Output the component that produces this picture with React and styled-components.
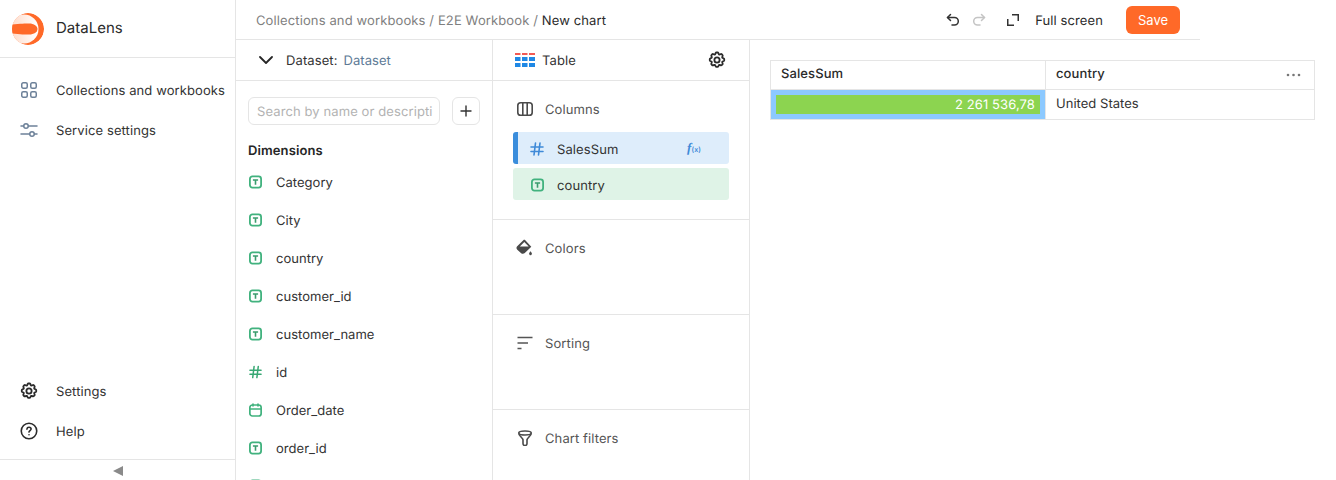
import React from 'react'
import styled, { createGlobalStyle } from 'styled-components'

const GlobalStyle = createGlobalStyle`
    html, body {
        margin: 0;
        padding: 0;
        height: 100%;
        background: #fff;
        font-family: Inter, "Noto Sans", sans-serif;
        font-size: 13px;
        line-height: 18px;
        letter-spacing: 0.1px;
        color: #2b2b2b;
        text-rendering: geometricPrecision;
    }
    * { box-sizing: border-box; }
`;

const Page = styled.div`
    display: flex;
    width: 100%;
    height: 100vh;
    overflow: hidden;
`;

const Label = styled.span`
    padding-top: 2px;
`;

const Sidebar = styled.aside`
    display: flex;
    flex-direction: column;
    flex: 0 0 236px;
    border-right: 1px solid #e5e5e5;
`;

const Brand = styled.div`
    display: flex;
    align-items: center;
    gap: 12px;
    height: 58px;
    padding-left: 12px;
    border-bottom: 1px solid #e5e5e5;
    font-size: 15px;
    letter-spacing: 0;
`;

const BrandName = styled.span`
    padding-bottom: 2px;
`;

const NavGroup = styled.nav`
    display: flex;
    flex-direction: column;
    padding-top: ${props => props.$top || 0}px;
    padding-bottom: ${props => props.$bottom || 0}px;
`;

const NavItem = styled.div`
    display: flex;
    align-items: center;
    gap: 18px;
    height: 40px;
    padding-left: 20px;
    white-space: nowrap;
    color: #333;
    svg { flex: none; }
`;

const Spacer = styled.div`
    flex: 1;
`;

const Collapse = styled.div`
    display: flex;
    justify-content: center;
    align-items: center;
    height: 21px;
    border-top: 1px solid #e5e5e5;
    padding-top: 1px;
`;

const Arrow = styled.span`
    width: 0;
    height: 0;
    border-top: 5px solid transparent;
    border-bottom: 5px solid transparent;
    border-right: 10px solid #8a8a8a;
`;

const Main = styled.div`
    display: flex;
    flex-direction: column;
    flex: 1;
    min-width: 0;
`;

const Header = styled.header`
    display: flex;
    align-items: center;
    width: 964px;
    height: 40px;
    padding: 0 20px;
    border-bottom: 1px solid #e5e5e5;
`;

const Crumbs = styled.div`
    flex: 1;
    padding-top: 2px;
    color: #7f7f7f;
    white-space: nowrap;
    letter-spacing: 0.12px;
`;

const Current = styled.span`
    color: #2b2b2b;
`;

const Actions = styled.div`
    display: flex;
    align-items: center;
`;

const IconSlot = styled.span`
    display: flex;
    align-items: center;
    justify-content: center;
    width: 16px;
    height: 16px;
    margin-right: ${props => props.$right || 0}px;
    transform: ${props => props.$flip ? 'scaleX(-1)' : 'none'};
`;

const FullScreen = styled.span`
    margin-right: 23px;
    padding-top: 2px;
    color: #2b2b2b;
`;

const SaveButton = styled.button`
    width: 54px;
    height: 28px;
    border: none;
    border-radius: 6px;
    background: #ff6928;
    color: #fff;
    font: inherit;
    padding: 0;
`;

const Workspace = styled.div`
    display: flex;
    flex: 1;
    min-height: 0;
`;

const Column = styled.section`
    display: flex;
    flex-direction: column;
    flex: 0 0 257px;
    border-right: 1px solid #e5e5e5;
    overflow: hidden;
`;

const PanelHead = styled.div`
    display: flex;
    align-items: center;
    flex: none;
    height: 41px;
    padding: 0 ${props => props.$right || 0}px 0 ${props => props.$left || 0}px;
    border-bottom: 1px solid #e5e5e5;
`;

const DatasetLabel = styled.span`
    margin-left: 13px;
    padding-top: 2px;
    color: #333;
`;

const DatasetLink = styled.span`
    margin-left: 6px;
    padding-top: 2px;
    color: #5d7a96;
    letter-spacing: 0.05px;
`;

const SearchRow = styled.div`
    display: flex;
    gap: 12px;
    padding: 16px 12px 0;
`;

const SearchBox = styled.div`
    width: 192px;
    height: 28px;
    padding: 0 8px;
    border: 1px solid #e5e5e5;
    border-radius: 6px;
    color: #b3b3b3;
    line-height: 28px;
    white-space: nowrap;
    overflow: hidden;
`;

const AddButton = styled.div`
    display: flex;
    align-items: center;
    justify-content: center;
    width: 28px;
    height: 28px;
    border: 1px solid #e5e5e5;
    border-radius: 6px;
`;

const GroupTitle = styled.div`
    margin: 17px 12px 0;
    height: 17px;
    line-height: 18px;
    font-weight: 600;
    color: #262626;
`;

const FieldList = styled.div`
    display: flex;
    flex-direction: column;
    margin-top: 4px;
`;

const Field = styled.div`
    display: flex;
    flex: none;
    align-items: center;
    gap: 14px;
    height: 38px;
    padding-left: 13px;
    color: #333;
    letter-spacing: 0.03px;
`;

const ChartName = styled.span`
    flex: 1;
    margin-left: 7px;
    padding-top: 2px;
    color: #333;
`;

const Section = styled.div`
    flex: none;
    height: ${props => props.$height}px;
    padding: 0 20px;
    border-bottom: ${props => props.$last ? 'none' : '1px solid #e5e5e5'};
`;

const SectionTitle = styled.div`
    display: flex;
    align-items: center;
    gap: 11px;
    height: 56px;
    padding-left: 3px;
    color: #555;
    margin-bottom: -5px;
`;

const SectionIcon = styled.span`
    display: flex;
    align-items: center;
    justify-content: center;
    width: 18px;
    height: 18px;
`;

const Chip = styled.div`
    display: flex;
    align-items: center;
    gap: 13px;
    width: 216px;
    height: 32px;
    margin-top: ${props => props.$top || 0}px;
    padding-top: 2px;
    padding-left: ${props => props.$accent ? '12px' : '18px'};
    border-left: ${props => props.$accent ? '5px solid #3a8ddc' : 'none'};
    border-radius: 3px;
    background: ${props => props.$bg};
    color: #333;
`;

const ChipName = styled.span`
    flex: 1;
    padding-top: 2px;
`;

const Formula = styled.span`
    margin-right: 28px;
    color: #3f8ad8;
    font-family: "Liberation Serif", serif;
    font-style: italic;
    font-weight: 700;
    font-size: 13px;
    white-space: nowrap;
`;

const FormulaX = styled.span`
    font-family: Inter, sans-serif;
    font-style: normal;
    font-weight: 600;
    font-size: 7px;
`;

const Preview = styled.div`
    flex: 1;
    padding: 20px;
`;

const Table = styled.table`
    width: 545px;
    border-collapse: collapse;
    table-layout: fixed;
    font-size: 13px;
`;

const HeadCell = styled.th`
    position: relative;
    height: 29px;
    padding: 0 10px 3px;
    border: 1px solid #e5e5e5;
    font-weight: 500;
    text-align: left;
    color: #2b2b2b;
`;

const Dots = styled.span`
    position: absolute;
    right: 13px;
    top: 12px;
    display: flex;
    line-height: 0;
`;

const BarCell = styled.td`
    height: 30px;
    padding: 5px;
    border: 1px solid #e5e5e5;
    background: #8cc9ff;
`;

const Bar = styled.div`
    height: 19px;
    padding-right: 5px;
    background: #8cd450;
    color: #fff;
    line-height: 21px;
    text-align: right;
    white-space: nowrap;
    overflow: hidden;
`;

const TextCell = styled.td`
    padding: 0 10px 1px;
    border: 1px solid #e5e5e5;
    color: #333;
    letter-spacing: 0.03px;
`;

const Logo = () => (
    <svg width="32" height="32" viewBox="0 0 32 32">
        <defs>
            <clipPath id="logo-clip"><circle cx="16" cy="16" r="16" /></clipPath>
            <linearGradient id="logo-fill" x1="0" y1="0" x2="1" y2="0">
                <stop offset="0" stopColor="#ffd9c7" />
                <stop offset="1" stopColor="#ffffff" />
            </linearGradient>
        </defs>
        <g clipPath="url(#logo-clip)">
            <circle cx="16" cy="16" r="16" fill="#ff6928" />
            <circle cx="12" cy="16" r="14.500" fill="url(#logo-fill)" />
            <path d="M0 11.500C8 10.500 14 10.500 17 10.500 22 10.500 25.500 13 25.500 16 25.500 19 22 21.500 17 21.500 14 21.500 8 21.500 0 20.500z" fill="#ff6928" />
        </g>
    </svg>
);

const Grid = () => (
    <svg width="18" height="18" viewBox="0 0 18 18" fill="none" stroke="#6d8199" strokeWidth="1.500">
        <rect x="1.750" y="1.750" width="5.500" height="5.500" rx="1.500" />
        <rect x="10.750" y="1.750" width="5.500" height="5.500" rx="1.500" />
        <rect x="1.750" y="10.750" width="5.500" height="5.500" rx="1.500" />
        <rect x="10.750" y="10.750" width="5.500" height="5.500" rx="1.500" />
    </svg>
);

const Sliders = () => (
    <svg width="18" height="18" viewBox="0 0 18 18" fill="none" stroke="#6d8199" strokeWidth="1.500" strokeLinecap="round">
        <path d="M1 5h2.500M8.500 5H17M1 13h8.500M14.500 13H17" />
        <circle cx="6" cy="5" r="2.250" />
        <circle cx="12" cy="13" r="2.250" />
    </svg>
);

const Gear = ({ size = 18, color = '#2b2b2b' }) => (
    <svg width={size} height={size} viewBox="0 0 24 24" fill="none" stroke={color} strokeWidth="2.400" strokeLinecap="round" strokeLinejoin="round">
        <path d="M9.670 4.140 10.300 2.600a1 1 0 0 1 .93-.6h1.540a1 1 0 0 1 .93.600l.63 1.540a1 1 0 0 0 1.300.540l1.560-.600a1 1 0 0 1 1.060.220l1.090 1.090a1 1 0 0 1 .22 1.060l-.6 1.560a1 1 0 0 0 .54 1.300l1.540.63a1 1 0 0 1 .6.930v1.540a1 1 0 0 1-.6.930l-1.540.63a1 1 0 0 0-.54 1.300l.6 1.560a1 1 0 0 1-.22 1.060l-1.090 1.090a1 1 0 0 1-1.060.220l-1.560-.600a1 1 0 0 0-1.300.540l-.63 1.540a1 1 0 0 1-.93.600h-1.540a1 1 0 0 1-.93-.600l-.63-1.540a1 1 0 0 0-1.300-.540l-1.560.600a1 1 0 0 1-1.060-.220l-1.090-1.090a1 1 0 0 1-.22-1.060l.6-1.560a1 1 0 0 0-.54-1.300l-1.540-.63a1 1 0 0 1-.6-.930v-1.540a1 1 0 0 1 .6-.930l1.540-.63a1 1 0 0 0 .54-1.300l-.6-1.560a1 1 0 0 1 .22-1.060l1.090-1.090a1 1 0 0 1 1.060-.220l1.560.600a1 1 0 0 0 1.300-.540z" />
        <circle cx="12" cy="12" r="3.500" />
    </svg>
);

const Help = () => (
    <svg width="18" height="18" viewBox="0 0 18 18" fill="none" stroke="#2b2b2b" strokeWidth="1.600" strokeLinecap="round">
        <circle cx="9" cy="9" r="7.750" />
        <path d="M6.900 7.100A2.100 2.100 0 0 1 9 5.300c1.200 0 2.100.8 2.100 1.800 0 1.500-2.100 1.500-2.100 3" />
        <path d="M9 12.700v.1" />
    </svg>
);

const TextType = () => (
    <svg width="13" height="14" viewBox="0 0 13 14" fill="none" stroke="#41b27e" strokeWidth="1.800">
        <rect x=".900" y="1.400" width="11.200" height="11.200" rx="2.500" />
        <path d="M3.900 5h5.200M6.500 5v4.800" stroke="#3a9c6d" strokeWidth="1.600" />
    </svg>
);

const Hash = ({ color = '#38a874', width = 13 }) => (
    <svg width={width} height="14" viewBox="0 0 14 14" fill="none" stroke={color} strokeWidth="1.600" strokeLinecap="round">
        <path d="M1 5h12M1 9.500h12M5.500 1 4 13M10 1 8.500 13" />
    </svg>
);

const DateType = () => (
    <svg width="13" height="14" viewBox="0 0 13 14" fill="none" stroke="#41b27e" strokeWidth="1.700">
        <rect x=".850" y="2" width="11.300" height="11" rx="2.500" />
        <path d="M1 6h11M4 .5v3M9 .5v3" />
    </svg>
);

const Chevron = () => (
    <svg width="14" height="14" viewBox="0 0 14 14" fill="none" stroke="#262626" strokeWidth="1.800" strokeLinecap="round" strokeLinejoin="round">
        <path d="M1 4l6 6 6-6" />
    </svg>
);

const Plus = () => (
    <svg width="12" height="12" viewBox="0 0 12 12" stroke="#333" strokeWidth="1.400" strokeLinecap="round">
        <path d="M6 1v10M1 6h10" />
    </svg>
);

const TableLogo = () => (
    <svg width="20" height="14" viewBox="0 0 20 14">
        <g fill="#f25a54">
            <rect x="0" y="0" width="5.500" height="2" />
            <rect x="7" y="0" width="5.500" height="2" />
            <rect x="14" y="0" width="6" height="2" />
        </g>
        <g fill="#1f88e5">
            <rect x="0" y="4" width="5.500" height="4" />
            <rect x="7" y="4" width="5.500" height="4" />
            <rect x="14" y="4" width="6" height="4" />
            <rect x="0" y="10" width="5.500" height="4" />
            <rect x="7" y="10" width="5.500" height="4" />
            <rect x="14" y="10" width="6" height="4" />
        </g>
    </svg>
);

const ColumnsIcon = () => (
    <svg width="16" height="16" viewBox="0 0 16 16" fill="none" stroke="#4a4a4a" strokeWidth="1.600">
        <rect x=".800" y="1.800" width="14.400" height="12.400" rx="2.800" />
        <path d="M5.800 2v12M10.200 2v12" />
    </svg>
);

const BucketIcon = () => (
    <svg width="18" height="18" viewBox="0 0 18 18">
        <path d="M9.300 1.200 15.300 7.700 8.800 14c-.9.8-2.500 1-3.600.2L1.300 10.700C.2 9.700.2 8.300 1.200 7.300L7.300 1.200c.6-.6 1.400-.6 2 0z" fill="#4a4a4a" />
        <path d="M8.300 2.900 12.700 7.400H3.800z" fill="#fff" />
        <path d="M14.500 12.200c.9 1.200 1.400 1.900 1.400 2.600a1.400 1.400 0 0 1-2.800 0c0-.7.500-1.400 1.400-2.600z" fill="#4a4a4a" />
    </svg>
);

const SortIcon = () => (
    <svg width="16" height="16" viewBox="0 0 16 16" stroke="#555" strokeWidth="1.500" strokeLinecap="butt">
        <path d="M.5 2.500h15M.5 8H11M.5 13.500h4" />
    </svg>
);

const FunnelIcon = () => (
    <svg width="16" height="16" viewBox="0 0 16 16" fill="none" stroke="#4a4a4a" strokeWidth="1.600" strokeLinejoin="round">
        <ellipse cx="8" cy="3" rx="6.250" ry="2" />
        <path d="M1.750 3.500c.3 2.500 4.250 4.500 4.250 6.500v3.500a2 2 0 0 0 4 0V10c0-2 3.950-4 4.250-6.500" />
    </svg>
);

const Undo = ({ color = '#333' }) => (
    <svg width="14" height="14" viewBox="0 0 14 14" fill="none" stroke={color} strokeWidth="1.500" strokeLinecap="round" strokeLinejoin="round">
        <path d="M4.500 1.500 1.500 4.500l3 3" />
        <path d="M1.500 4.500h7a3.800 3.800 0 0 1 0 7.600H6" />
    </svg>
);

const Expand = () => (
    <svg width="14" height="14" viewBox="0 0 14 14" fill="none" stroke="#333" strokeWidth="1.500">
        <path d="M6 1.750h6.250V8M1.750 6v6.250H8" />
    </svg>
);

const fields = [
    { name: 'Category', type: 'text' },
    { name: 'City', type: 'text' },
    { name: 'country', type: 'text' },
    { name: 'customer_id', type: 'text' },
    { name: 'customer_name', type: 'text' },
    { name: 'id', type: 'number' },
    { name: 'Order_date', type: 'date' },
    { name: 'order_id', type: 'text' },
    { name: '', type: 'text' },
];

const FieldIcon = ({ type }) => {
    if (type === 'number') return <Hash />;
    if (type === 'date') return <DateType />;
    return <TextType />;
};

export default function App() {
    return (
        <Page>
            <GlobalStyle />
            <Sidebar>
                <Brand><Logo /><BrandName>DataLens</BrandName></Brand>
                <NavGroup $top={12}>
                    <NavItem><Grid /><Label>Collections and workbooks</Label></NavItem>
                    <NavItem><Sliders /><Label>Service settings</Label></NavItem>
                </NavGroup>
                <Spacer />
                <NavGroup $bottom={8}>
                    <NavItem><Gear /><Label>Settings</Label></NavItem>
                    <NavItem><Help /><Label>Help</Label></NavItem>
                </NavGroup>
                <Collapse><Arrow /></Collapse>
            </Sidebar>
            <Main>
                <Header>
                    <Crumbs>Collections and workbooks / E2E Workbook / <Current>New chart</Current></Crumbs>
                    <Actions>
                        <IconSlot $right={10}><Undo /></IconSlot>
                        <IconSlot $right={18} $flip><Undo color="#c4c4c4" /></IconSlot>
                        <IconSlot $right={14}><Expand /></IconSlot>
                        <FullScreen>Full screen</FullScreen>
                        <SaveButton>Save</SaveButton>
                    </Actions>
                </Header>
                <Workspace>
                    <Column>
                        <PanelHead $left={23}>
                            <Chevron />
                            <DatasetLabel>Dataset:</DatasetLabel>
                            <DatasetLink>Dataset</DatasetLink>
                        </PanelHead>
                        <SearchRow>
                            <SearchBox>Search by name or descripti</SearchBox>
                            <AddButton><Plus /></AddButton>
                        </SearchRow>
                        <GroupTitle>Dimensions</GroupTitle>
                        <FieldList>
                            {fields.map((field, index) => (
                                <Field key={index}>
                                    <FieldIcon type={field.type} />
                                    <Label>{field.name}</Label>
                                </Field>
                            ))}
                        </FieldList>
                    </Column>
                    <Column>
                        <PanelHead $left={22} $right={23}>
                            <TableLogo />
                            <ChartName>Table</ChartName>
                            <Gear />
                        </PanelHead>
                        <Section $height={139}>
                            <SectionTitle><SectionIcon><ColumnsIcon /></SectionIcon><Label>Columns</Label></SectionTitle>
                            <Chip $accent $bg="#deedfb">
                                <Hash color="#3f8ad8" width={14} />
                                <ChipName>SalesSum</ChipName>
                                <Formula>f<FormulaX>(x)</FormulaX></Formula>
                            </Chip>
                            <Chip $top={4} $bg="#dff3e7">
                                <TextType />
                                <ChipName>country</ChipName>
                            </Chip>
                        </Section>
                        <Section $height={95}>
                            <SectionTitle><SectionIcon><BucketIcon /></SectionIcon><Label>Colors</Label></SectionTitle>
                        </Section>
                        <Section $height={95}>
                            <SectionTitle><SectionIcon><SortIcon /></SectionIcon><Label>Sorting</Label></SectionTitle>
                        </Section>
                        <Section $height={70} $last>
                            <SectionTitle><SectionIcon><FunnelIcon /></SectionIcon><Label>Chart filters</Label></SectionTitle>
                        </Section>
                    </Column>
                    <Preview>
                        <Table>
                            <colgroup>
                                <col style={{ width: 275 }} />
                                <col />
                            </colgroup>
                            <thead>
                                <tr>
                                    <HeadCell>SalesSum</HeadCell>
                                    <HeadCell>
                                        country
                                        <Dots>
                                            <svg width="15" height="4" viewBox="0 0 15 4" fill="#777">
                                                <circle cx="2" cy="2" r="1.300" />
                                                <circle cx="7.500" cy="2" r="1.300" />
                                                <circle cx="13" cy="2" r="1.300" />
                                            </svg>
                                        </Dots>
                                    </HeadCell>
                                </tr>
                            </thead>
                            <tbody>
                                <tr>
                                    <BarCell><Bar>2 261 536,78</Bar></BarCell>
                                    <TextCell>United States</TextCell>
                                </tr>
                            </tbody>
                        </Table>
                    </Preview>
                </Workspace>
            </Main>
        </Page>
    )
}
